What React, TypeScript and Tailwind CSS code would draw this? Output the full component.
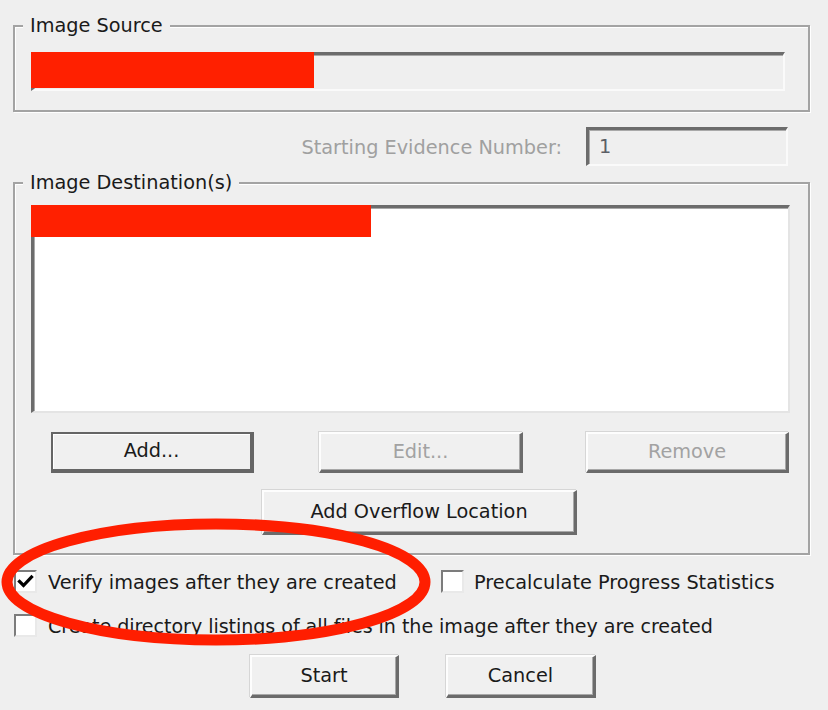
import React from 'react';

// Classic Windows dialog pieces
const GroupBox: React.FC<{ title: string; className?: string; children?: React.ReactNode }> = ({ title, className, children }) => (
  <div
    className={`relative ml-[13px] w-[797px] border-2 border-[#a3a3a3] shadow-[inset_1px_1px_0_#ffffff,1px_1px_0_#ffffff] ${className ?? ''}`}
  >
    <span className="absolute -top-[12px] left-[8px] bg-[#efefef] px-[7px] leading-[22px] text-[#1a1a1a] whitespace-nowrap">
      {title}
    </span>
    {children}
  </div>
);

const Button: React.FC<{ label: string; width: string; height: string; disabled?: boolean; isDefault?: boolean }> = ({
  label,
  width,
  height,
  disabled,
  isDefault,
}) => {
  const border = isDefault
    ? 'border-t-2 border-l-2 border-b-[4px] border-r-[4px] border-[#656565] shadow-[inset_1px_1px_0_#ffffff]'
    : 'border-t-2 border-l-2 border-t-[#fdfdfd] border-l-[#fdfdfd] border-b-[3px] border-r-[3px] border-b-[#6b6b6b] border-r-[#6b6b6b] shadow-[-1px_-1px_0_#d6d6d6,inset_-1px_-1px_0_#a8a8a8]';
  return (
    <div
      className={`${width} ${height} ${border} flex items-center justify-center bg-[#f0f0f0] whitespace-nowrap ${
        disabled ? 'text-[#a2a2a2]' : 'text-[#1a1a1a]'
      }`}
    >
      {label}
    </div>
  );
};

const CheckBox: React.FC<{ checked?: boolean }> = ({ checked }) => (
  <div className="w-[23px] h-[23px] shrink-0 border-t-2 border-l-2 border-t-[#7c7c7c] border-l-[#7c7c7c] border-b-2 border-r-2 border-b-[#e9e9e9] border-r-[#e9e9e9] bg-white flex items-center justify-center">
    {checked && (
      <svg width="17" height="15" viewBox="0 0 17 15">
        <path d="M2.5 7.5 L6.5 11.5 L14.5 3" fill="none" stroke="#000" strokeWidth="3.2" strokeLinecap="square" />
      </svg>
    )}
  </div>
);

export default function App() {
  return (
    <div className="relative w-[828px] h-[710px] overflow-hidden bg-[#efefef] font-['DejaVu_Sans','Liberation_Sans',sans-serif] text-[19.3px] text-[#1a1a1a]">
      {/* Image Source */}
      <GroupBox title="Image Source" className="mt-[25px] h-[87px] pt-[25px] pl-[16px]">
        <div className="relative w-[754px] h-[39px] border-t-[3px] border-l-[3px] border-t-[#6c6c6c] border-l-[#6c6c6c] border-b-2 border-r-2 border-b-[#fafafa] border-r-[#fafafa] bg-[#efefef] shadow-[inset_1px_1px_0_#a9a9a9]">
          <div className="absolute -top-[3px] -left-[3px] w-[283px] h-[36px] bg-[#ff2000]" />
        </div>
      </GroupBox>

      {/* Starting Evidence Number */}
      <div className="mt-[15px] pr-[40px] flex items-center justify-end gap-[24px]">
        <span className="pt-[3px] text-[#a0a0a0] whitespace-nowrap">Starting Evidence Number:</span>
        <div className="w-[202px] h-[39px] border-t-[3px] border-l-[3px] border-t-[#6c6c6c] border-l-[#6c6c6c] border-b-2 border-r-2 border-b-[#fafafa] border-r-[#fafafa] bg-[#efefef] shadow-[inset_1px_1px_0_#a9a9a9] flex items-center pl-[10px] text-[#5b5e66]">
          1
        </div>
      </div>

      {/* Image Destination(s) */}
      <GroupBox title="Image Destination(s)" className="mt-[16px] h-[373px] pt-[21px] pl-[16px]">
        <div className="relative w-[759px] h-[208px] border-t-[3px] border-l-[3px] border-t-[#6c6c6c] border-l-[#6c6c6c] border-b-2 border-r-2 border-b-[#e4e4e4] border-r-[#e4e4e4] bg-white shadow-[inset_1px_1px_0_#a9a9a9]">
          <div className="absolute -top-[3px] -left-[3px] w-[340px] h-[32px] bg-[#ff2000]" />
        </div>
        <div className="mt-[19px] ml-[20px] flex">
          <Button label="Add..." width="w-[203px]" height="h-[41px]" isDefault />
          <div className="ml-[65px]">
            <Button label="Edit..." width="w-[204px]" height="h-[41px]" disabled />
          </div>
          <div className="ml-[63px]">
            <Button label="Remove" width="w-[203px]" height="h-[41px]" disabled />
          </div>
        </div>
        <div className="mt-[17px] ml-[231px]">
          <Button label="Add Overflow Location" width="w-[315px]" height="h-[45px]" />
        </div>
      </GroupBox>

      {/* Options */}
      <div className="mt-[15px] ml-[14px] flex items-center h-[23px]">
        <div className="w-[427px] flex items-center gap-[11px]">
          <CheckBox checked />
          <span className="pt-[3px] whitespace-nowrap">Verify images after they are created</span>
        </div>
        <div className="flex items-center gap-[10px]">
          <CheckBox />
          <span className="pt-[3px] whitespace-nowrap">Precalculate Progress Statistics</span>
        </div>
      </div>
      <div className="mt-[21px] ml-[14px] flex items-center gap-[11px] h-[23px]">
        <CheckBox />
        <span className="pt-[3px] text-[19.1px] tracking-[-0.05px] whitespace-nowrap">
          Create directory listings of all files in the image after they are created
        </span>
      </div>

      {/* Start / Cancel */}
      <div className="mt-[18px] ml-[250px] flex gap-[47px]">
        <Button label="Start" width="w-[149px]" height="h-[43px]" />
        <Button label="Cancel" width="w-[150px]" height="h-[43px]" />
      </div>

      {/* red annotation ellipse */}
      <svg className="absolute left-0 top-[518px] pointer-events-none" width="434" height="130" viewBox="0 0 434 130">
        <ellipse cx="216" cy="64" rx="209" ry="58" fill="none" stroke="#ff1e00" strokeWidth="11" />
      </svg>
    </div>
  );
}
